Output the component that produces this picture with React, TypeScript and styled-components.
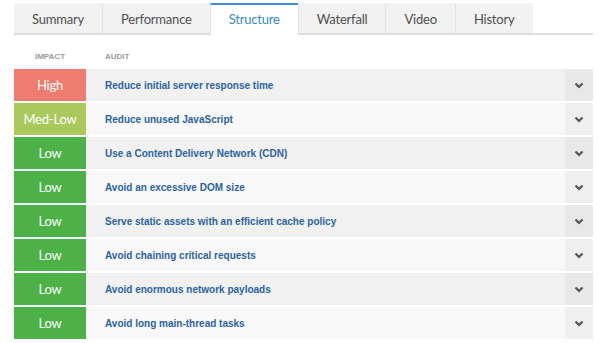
import styled, { createGlobalStyle } from 'styled-components';

const GlobalStyle = createGlobalStyle`
  html, body {
    margin: 0;
    padding: 0;
    background: #ffffff;
  }
`;

const UI_FONT = `Lato, 'Liberation Sans', sans-serif`;

type Impact = 'High' | 'Med-Low' | 'Low';

const IMPACT_COLOR: Record<Impact, string> = {
  High: '#f07b6f',
  'Med-Low': '#aac85c',
  Low: '#4cb147',
};

const TABS = ['Summary', 'Performance', 'Structure', 'Waterfall', 'Video', 'History'];

const AUDITS: { impact: Impact; title: string }[] = [
  { impact: 'High', title: 'Reduce initial server response time' },
  { impact: 'Med-Low', title: 'Reduce unused JavaScript' },
  { impact: 'Low', title: 'Use a Content Delivery Network (CDN)' },
  { impact: 'Low', title: 'Avoid an excessive DOM size' },
  { impact: 'Low', title: 'Serve static assets with an efficient cache policy' },
  { impact: 'Low', title: 'Avoid chaining critical requests' },
  { impact: 'Low', title: 'Avoid enormous network payloads' },
  { impact: 'Low', title: 'Avoid long main-thread tasks' },
];

const Page = styled.div`
  padding: 3px 7px 0 14px;
  font-family: ${UI_FONT};
`;

const TabBar = styled.div`
  display: flex;
  border-bottom: 2px solid #dedede;
`;

const Tab = styled.div<{ $active?: boolean }>`
  height: 28px;
  padding: 0 18px;
  display: flex;
  align-items: center;

  font-size: 13px;
  letter-spacing: -0.2px;
  color: ${({ $active }) => ($active ? '#3588cf' : '#4f4f4f')};
  background: ${({ $active }) => ($active ? '#ffffff' : '#f2f2f2')};
  border-top: 2px solid ${({ $active }) => ($active ? '#3a8fd8' : '#f2f2f2')};
  margin-bottom: ${({ $active }) => ($active ? '-2px' : '0')};
  padding-bottom: ${({ $active }) => ($active ? '2px' : '0')};

  & + & {
    border-left: 1px solid #e2e2e2;
  }
`;

const HeaderRow = styled.div`
  height: 34px;
  display: grid;
  grid-template-columns: 72px 1fr;
  align-items: end;
  padding-bottom: 8px;
  box-sizing: border-box;

  font-family: 'Liberation Sans', Arial, sans-serif;
  font-size: 8px;
  font-weight: bold;
  color: #9a9a9a;
  text-transform: uppercase;
`;

const HeaderCell = styled.div<{ $center?: boolean }>`
  text-align: ${({ $center }) => ($center ? 'center' : 'left')};
  padding-left: ${({ $center }) => ($center ? '0' : '19px')};
`;

const List = styled.div`
  display: flex;
  flex-direction: column;
  gap: 2px;
`;

const Row = styled.div<{ $odd: boolean }>`
  height: 32px;
  display: grid;
  grid-template-columns: 72px 1fr 28px;
  background: ${({ $odd }) => ($odd ? '#f1f1f1' : '#f8f8f8')};
`;

const ImpactCell = styled.div<{ $impact: Impact }>`
  display: flex;
  align-items: center;
  justify-content: center;
  background: ${({ $impact }) => IMPACT_COLOR[$impact]};
  color: #ffffff;
  font-size: 13px;
  letter-spacing: -0.2px;
`;

const AuditTitle = styled.div`
  display: flex;
  align-items: center;
  padding-left: 19px;

  font-family: 'Liberation Sans', Arial, sans-serif;
  font-size: 10px;
  font-weight: bold;
  color: #2b63a3;
  white-space: nowrap;
`;

const Toggle = styled.div<{ $odd: boolean }>`
  display: flex;
  align-items: center;
  justify-content: center;
  background: ${({ $odd }) => ($odd ? '#e8e8e8' : '#efefef')};
`;

function Chevron() {
  return (
    <svg width="10" height="7" viewBox="0 0 10 7">
      <polyline
        points="1.5,1.5 5,5 8.5,1.5"
        fill="none"
        stroke="#555"
        strokeWidth="2.2"
      />
    </svg>
  );
}

function App() {
  return (
    <Page>
      <GlobalStyle />
      <TabBar>
        {TABS.map((tab) => (
          <Tab key={tab} $active={tab === 'Structure'}>
            {tab}
          </Tab>
        ))}
      </TabBar>
      <HeaderRow>
        <HeaderCell $center>Impact</HeaderCell>
        <HeaderCell>Audit</HeaderCell>
      </HeaderRow>
      <List>
        {AUDITS.map((audit, i) => (
          <Row key={audit.title} $odd={i % 2 === 0}>
            <ImpactCell $impact={audit.impact}>{audit.impact}</ImpactCell>
            <AuditTitle>{audit.title}</AuditTitle>
            <Toggle $odd={i % 2 === 0}>
              <Chevron />
            </Toggle>
          </Row>
        ))}
      </List>
    </Page>
  );
}

export default App;
